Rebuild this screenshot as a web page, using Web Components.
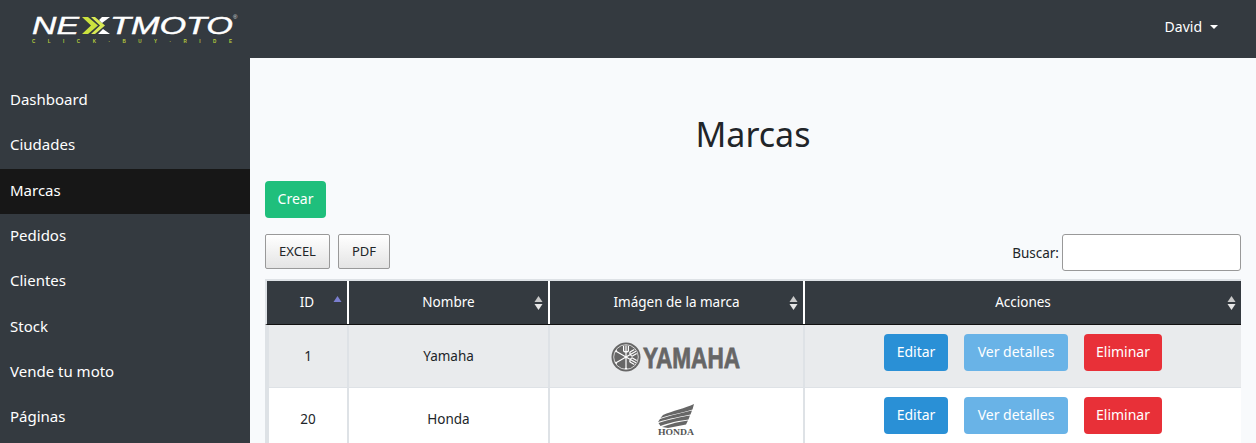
<!DOCTYPE html>
<html lang="es">
<head>
<meta charset="utf-8">
<title>Marcas</title>
<style>
	html, body { margin: 0; height: 443px; overflow: hidden; background: #f8fafc; }
	body { font-family: "Noto Sans", "Open Sans", sans-serif; font-size: 14px; color: #212529; }
</style>
</head>
<body>
<admin-layout>
	<top-bar slot="top" usuario="David"></top-bar>
	<side-menu slot="side">
		<menu-item>Dashboard</menu-item>
		<menu-item>Ciudades</menu-item>
		<menu-item activo>Marcas</menu-item>
		<menu-item>Pedidos</menu-item>
		<menu-item>Clientes</menu-item>
		<menu-item>Stock</menu-item>
		<menu-item>Vende tu moto</menu-item>
		<menu-item>Páginas</menu-item>
	</side-menu>
	<marcas-page>
		<marcas-row slot="filas" num="1" nombre="Yamaha" impar><yamaha-logo></yamaha-logo></marcas-row>
		<marcas-row slot="filas" num="20" nombre="Honda"><honda-logo></honda-logo></marcas-row>
	</marcas-page>
</admin-layout>

<script>
class AdminLayout extends HTMLElement {
	constructor() {
		super();
		this.attachShadow({ mode: 'open' });
		this.shadowRoot.innerHTML = `
			<style>
				:host { display: grid; grid-template: 58px 1fr / 250px 1fr; height: 443px; overflow: hidden; }
				.top { grid-column: 1 / 3; }
				.main { min-width: 0; background: #f8fafc; overflow: hidden; }
			</style>
			<div class="top"><slot name="top"></slot></div>
			<div><slot name="side"></slot></div>
			<div class="main"><slot></slot></div>
		`;
	}
}
customElements.define('admin-layout', AdminLayout);

class BrandLogo extends HTMLElement {
	constructor() {
		super();
		this.attachShadow({ mode: 'open' });
		// el texto del logo queda como texto real, solo las flechas de la X van dibujadas
		this.shadowRoot.innerHTML = `
			<style>
				:host { display: block; width: 215px; height: 34px; margin-top: 4px; }
				svg { display: block; overflow: visible; }
				text { font-family: "Liberation Sans", sans-serif; }
			</style>
			<svg width="215" height="34" viewBox="0 0 215 34">
				<g fill="#fff" stroke="#fff" stroke-width=".4" font-style="italic" font-size="24">
					<text x="0" y="20" textLength="47" lengthAdjust="spacingAndGlyphs">NE</text>
					<text x="78" y="20" textLength="123" lengthAdjust="spacingAndGlyphs">TMOTO</text>
				</g>
				<path d="M50 3h6l10 8.500-10 8.500h-6l9-8.500z" fill="#cbe23e"/>
				<path d="M59 3h4l10 8.500-10 8.500h-4l9-8.500z" fill="#d9ea55"/>
				<path d="M78 3h-8l-3 3 3 3zM78 20h-12l5-5z" fill="#fff"/>
				<text x="0" y="28.500" textLength="200" font-size="4.600" font-weight="700" fill="#b6cc3c">C L I C K · B U Y · R I D E</text>
				<text x="201" y="5" font-size="6" fill="#ddd">®</text>
			</svg>
		`;
	}
}
customElements.define('brand-logo', BrandLogo);

class TopBar extends HTMLElement {
	constructor() {
		super();
		this.attachShadow({ mode: 'open' });
		this.shadowRoot.innerHTML = `
			<style>
				:host { display: flex; align-items: center; justify-content: space-between; height: 58px; background: #343a40; box-sizing: border-box; padding: 0 38px 0 32px; }
				.user { display: flex; align-items: center; gap: 8px; color: #fff; font-size: 14px; margin-bottom: 5px; }
				.caret { width: 0; height: 0; border: 4px solid transparent; border-top-color: #fff; border-bottom: 0; }
			</style>
			<brand-logo></brand-logo>
			<div class="user"><span>${this.getAttribute('usuario')}</span><i class="caret"></i></div>
		`;
	}
}
customElements.define('top-bar', TopBar);

class SideMenu extends HTMLElement {
	constructor() {
		super();
		this.attachShadow({ mode: 'open' });
		this.shadowRoot.innerHTML = `
			<style>
				:host { display: block; height: 385px; background: #343a40; padding-top: 20.500px; box-sizing: border-box; }
			</style>
			<slot></slot>
		`;
	}
}
customElements.define('side-menu', SideMenu);

class MenuItem extends HTMLElement {
	constructor() {
		super();
		this.attachShadow({ mode: 'open' });
		this.shadowRoot.innerHTML = `
			<style>
				:host { display: flex; align-items: center; height: 45.300px; box-sizing: border-box; padding: 0 0 4px 10px; color: #fff; font-size: 15px; }
				:host([activo]) { background: #171717; }
			</style>
			<slot></slot>
		`;
	}
}
customElements.define('menu-item', MenuItem);

class ActionButton extends HTMLElement {
	constructor() {
		super();
		this.attachShadow({ mode: 'open' });
		this.shadowRoot.innerHTML = `
			<style>
				:host { display: inline-flex; align-items: center; justify-content: center; height: 37px; width: var(--ancho, auto); box-sizing: border-box; padding-bottom: 2px; border-radius: 4px; background: var(--fondo, #3490dc); color: #fff; font-size: 14px; }
			</style>
			<slot></slot>
		`;
	}
}
customElements.define('action-button', ActionButton);

class ExportButton extends HTMLElement {
	constructor() {
		super();
		this.attachShadow({ mode: 'open' });
		this.shadowRoot.innerHTML = `
			<style>
				:host { display: inline-flex; align-items: center; justify-content: center; height: 35px; width: var(--ancho, auto); box-sizing: border-box; padding-bottom: 2px; border: 1px solid #999; border-radius: 2px; background: linear-gradient(#fff, #e4e4e4); color: #212529; font-size: 13px; }
			</style>
			<slot></slot>
		`;
	}
}
customElements.define('export-button', ExportButton);

class SortArrows extends HTMLElement {
	constructor() {
		super();
		this.attachShadow({ mode: 'open' });
		const arriba = this.hasAttribute('solo-arriba');
		this.shadowRoot.innerHTML = `
			<style>
				:host { position: absolute; right: 5px; top: 14px; display: block; width: 9px; height: 16px; }
				svg { display: block; }
			</style>
			<svg width="9" height="16" viewBox="0 0 9 16">
				${arriba
					? '<path d="M0.500 7L4.500 1L8.500 7z" fill="#7b7fd0"/>'
					: '<path d="M0.500 7L4.500 1L8.500 7z" fill="#c9c9c9"/><path d="M0.500 9L4.500 15L8.500 9z" fill="#e6e6e6"/>'}
			</svg>
		`;
	}
}
customElements.define('sort-arrows', SortArrows);

const COLUMNAS = '80px 201px 255px 1fr';

class MarcasPage extends HTMLElement {
	constructor() {
		super();
		this.attachShadow({ mode: 'open' });
		this.shadowRoot.innerHTML = `
			<style>
				:host { display: block; padding: 0 15px; }
				h1 { margin: 0; padding-top: 55px; height: 68px; text-align: center; font-size: 34px; line-height: 43px; font-weight: 400; color: #212529; }
				.crear { display: block; height: 37px; }
				action-button.verde { --fondo: #1fbf7c; --ancho: 61px; }
				.tools { display: flex; justify-content: space-between; align-items: flex-start; margin-top: 16px; height: 37px; }
				.exportar { display: flex; gap: 8px; }
				.excel { --ancho: 65px; }
				.pdf { --ancho: 52px; }
				label { display: flex; align-items: center; gap: 3px; font-size: 13.500px; }
				.caja { width: 177px; height: 35px; border: 1px solid #999; border-radius: 3px; background: #fff; }
				.tabla { margin-top: 8px; width: 976px; border-top: 2px solid #dee2e6; }
				.cab { display: grid; grid-template-columns: ${COLUMNAS}; height: 43px; background: #343a40; border-bottom: 1px solid #111; border-left: 2px solid #dee2e6; }
				.cab div { position: relative; display: flex; align-items: center; justify-content: center; padding-bottom: 2px; color: #fff; font-size: 13.500px; border-left: 2px solid #fff; }
				.cab div:first-child { border-left: 0; }
			</style>
			<h1>Marcas</h1>
			<div class="crear"><action-button class="verde">Crear</action-button></div>
			<div class="tools">
				<div class="exportar"><export-button class="excel">EXCEL</export-button><export-button class="pdf">PDF</export-button></div>
				<label>Buscar:<div class="caja"></div></label>
			</div>
			<div class="tabla">
				<div class="cab">
					<div>ID<sort-arrows solo-arriba></sort-arrows></div>
					<div>Nombre<sort-arrows></sort-arrows></div>
					<div>Imágen de la marca<sort-arrows></sort-arrows></div>
					<div>Acciones<sort-arrows></sort-arrows></div>
				</div>
				<slot name="filas"></slot>
			</div>
		`;
	}
}
customElements.define('marcas-page', MarcasPage);

class MarcasRow extends HTMLElement {
	constructor() {
		super();
		this.attachShadow({ mode: 'open' });
		this.shadowRoot.innerHTML = `
			<style>
				:host { display: grid; grid-template-columns: ${COLUMNAS}; height: 62px; border-bottom: 1px solid #dee2e6; border-left: 2px solid #dee2e6; background: #fff; }
				:host([impar]) { background: #e9ebed; }
				.c { display: flex; align-items: center; justify-content: center; font-size: 13.500px; border-left: 2px solid #dee2e6; }
				.c:first-child { border-left: 0; }
				.acc { gap: 16px; justify-content: flex-start; align-items: flex-start; padding: 9px 0 0 79px; }
				.azul { --fondo: #2a90d6; --ancho: 64px; }
				.claro { --fondo: #69b3e7; --ancho: 104px; }
				.rojo { --fondo: #e83038; --ancho: 78px; }
			</style>
			<div class="c">${this.getAttribute('num')}</div>
			<div class="c">${this.getAttribute('nombre')}</div>
			<div class="c"><slot></slot></div>
			<div class="c acc">
				<action-button class="azul">Editar</action-button>
				<action-button class="claro">Ver detalles</action-button>
				<action-button class="rojo">Eliminar</action-button>
			</div>
		`;
	}
}
customElements.define('marcas-row', MarcasRow);

class YamahaLogo extends HTMLElement {
	constructor() {
		super();
		this.attachShadow({ mode: 'open' });
		const horquilla = `<g stroke="#fff" stroke-width="1.200" fill="none">
			<path d="M15 15V3.500M12.600 4v4.500q0 1.400 2.400 1.400t2.400-1.400V4"/><path d="M15 15V27"/><path d="M13.800 26.500h2.400"/>
		</g>`;
		this.shadowRoot.innerHTML = `
			<style>
				:host { display: block; width: 130px; height: 30px; margin: 2px 2px 0 0; }
				svg { display: block; overflow: visible; }
				text { font-family: "Liberation Sans", sans-serif; }
			</style>
			<svg width="130" height="30" viewBox="0 0 130 30">
				<circle cx="15" cy="15" r="14.500" fill="#666"/>
				<circle cx="15" cy="15" r="12.300" fill="none" stroke="#eee" stroke-width=".8"/>
				${horquilla}
				<g transform="rotate(60 15 15)">${horquilla}</g>
				<g transform="rotate(120 15 15)">${horquilla}</g>
				<text x="32" y="25.500" textLength="97" lengthAdjust="spacingAndGlyphs" font-size="30" font-weight="700" fill="#666" stroke="#666" stroke-width=".8">YAMAHA</text>
			</svg>
		`;
	}
}
customElements.define('yamaha-logo', YamahaLogo);

class HondaLogo extends HTMLElement {
	constructor() {
		super();
		this.attachShadow({ mode: 'open' });
		this.shadowRoot.innerHTML = `
			<style>
				:host { display: block; width: 38px; height: 32px; margin: 2px 2px 0 0; }
				svg { display: block; overflow: visible; }
				text { font-family: "Liberation Serif", serif; }
			</style>
			<svg width="38" height="32" viewBox="0 0 38 32">
				<g fill="#666">
					<path d="M37 0 C29 4 15 7 6 11 L3.500 14 C14 10.500 28 8.500 35.500 5.500z"/>
					<path d="M35 6.500 C26 8.500 13 11.500 3 15 L1 18 C12 14.500 25 12.500 33.500 10.500z"/>
					<path d="M33 11.500 C24 13 12 15.500 1.500 19 L3.500 22 C12 18.500 24 16.500 31.500 15.500z"/>
					<path d="M31 16.500 C23 17.500 14 19.500 5 23 L11 24 L29 20.500z"/>
				</g>
				<text x="1" y="30.500" textLength="36" lengthAdjust="spacingAndGlyphs" font-size="8" font-weight="700" fill="#555">HONDA</text>
			</svg>
		`;
	}
}
customElements.define('honda-logo', HondaLogo);
</script>
</body>
</html>
